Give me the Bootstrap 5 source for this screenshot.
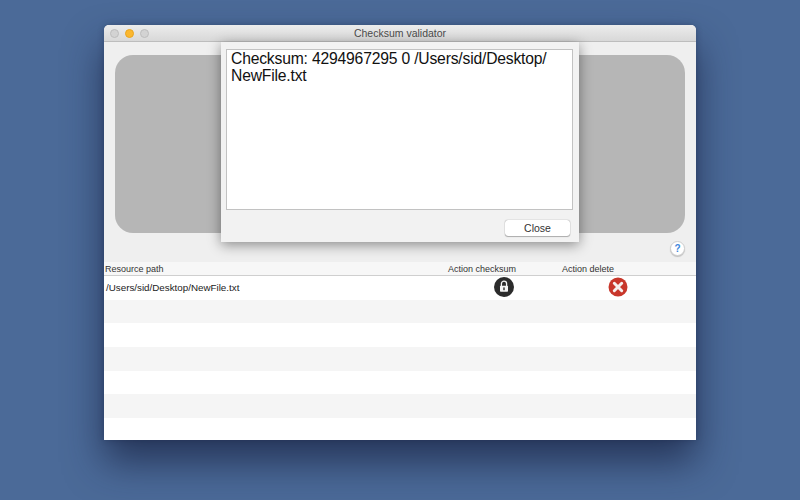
<!DOCTYPE html>
<html lang="en">
<head>
<meta charset="utf-8">
<title>Checksum validator</title>
<link href="https://cdn.jsdelivr.net/npm/bootstrap@5.3.0/dist/css/bootstrap.min.css" rel="stylesheet">
<style>
html,body{height:100%;margin:0}
body{background:#4b6a98;font-family:"Liberation Sans",Arial,sans-serif;overflow:hidden}
.desk{width:800px;height:500px;padding:25px 104px 60px}
.appwin{position:relative;width:592px;height:415px;background:#efefef;border-radius:5px 5px 1px 1px;box-shadow:0 22px 38px rgba(20,30,60,.68),0 0 6px rgba(20,30,60,.3)}
.titlebar{height:17px;background:linear-gradient(#ececec,#d8d8d8);border-radius:5px 5px 0 0;border-bottom:1px solid #bdbdbd;font-size:10.5px;line-height:16px;color:#4c4c4c;text-align:center;position:relative}
.lights{position:absolute;left:6px;top:4px;gap:6px}
.lamp{width:9px;height:9px;border-radius:50%;background:#d3d3d3;border:1px solid #bdbdbd}
.lamp-on{background:#fbb72f;border-color:#e9a51f}
.stage{height:220px;padding:13px 11px 0}
.panel{height:178px;background:#b6b6b6;border-radius:18px}
.helpbtn{position:absolute;left:566px;top:216px;width:15px;height:15px;border-radius:50%;background:#fff;border:1px solid #cfcfcf;box-shadow:0 1px 1px rgba(0,0,0,.2);color:#3d86dc;font-size:10px;font-weight:700;line-height:13px;text-align:center}
.thead-row{height:14px;background:#f7f7f7;border-bottom:1px solid #cfcfcf;font-size:9px;line-height:12px;color:#333;padding-top:1px}
.cellpath{width:344px;padding-left:1px}
.cellsum{width:114px}
.grid-row{height:23.7px;background:#fff;font-size:9.8px;color:#222;line-height:23.7px}
.grid-row:nth-child(even){background:#f5f5f5}
.cellpath2{width:344px;padding-left:2px}
.iconcell{width:114px;padding-left:46px;margin-top:-2px}
.iconcell svg{display:block}
.grid-body{height:164px;overflow:hidden;background:#fff;border-radius:0 0 1px 1px}
.sheet{position:absolute;left:117px;top:17px;width:358px;height:200px;background:#f2f2f2;box-shadow:0 3px 12px rgba(0,0,0,.42)}
.sheet-text{margin:7px 6px 0 5px;height:161px;background:#fff;border:1px solid #c2c2c2;padding:0 4px;font-size:15.7px;letter-spacing:-.19px;line-height:17px;color:#111}
.sheet-foot{padding:10px 9px 0 0}
.closebtn{width:65px;height:16px;background:#fff;border:0;border-radius:3px;box-shadow:0 0 1px rgba(0,0,0,.55),0 1px 1px rgba(0,0,0,.25);font-size:10.5px;line-height:16px;color:#333;padding:0;text-align:center}
</style>
</head>
<body>
<div class="desk">
  <div class="appwin">
    <div class="titlebar">Checksum validator
      <div class="lights d-flex"><span class="lamp"></span><span class="lamp lamp-on"></span><span class="lamp"></span></div>
    </div>
    <div class="stage"><div class="panel"></div></div>
    <div class="thead-row d-flex"><div class="cellpath">Resource path</div><div class="cellsum">Action checksum</div><div>Action delete</div></div>
    <div class="grid-body">
      <div class="grid-row d-flex align-items-center">
        <div class="cellpath2">/Users/sid/Desktop/NewFile.txt</div>
        <div class="iconcell">
          <svg width="20" height="20" viewBox="0 0 20 20"><circle cx="10" cy="10" r="10" fill="#2b2b2b"/><path d="M7.4 9V6.8a2.6 2.6 0 0 1 5.2 0V9" fill="none" stroke="#f4f4f4" stroke-width="1.3"/><rect x="6" y="8.8" width="8" height="6" rx=".8" fill="#f4f4f4"/><rect x="9.3" y="10.4" width="1.4" height="2.8" fill="#2b2b2b"/></svg>
        </div>
        <div class="iconcell">
          <svg width="20" height="20" viewBox="0 0 20 20"><circle cx="10" cy="10" r="9.5" fill="#c8372b"/><path d="M6.3 6.3l7.4 7.4M13.7 6.3l-7.4 7.4" stroke="#f6f0ee" stroke-width="3" stroke-linecap="round"/></svg>
        </div>
      </div>
      <div class="grid-row"></div><div class="grid-row"></div><div class="grid-row"></div><div class="grid-row"></div><div class="grid-row"></div><div class="grid-row"></div>
    </div>
    <div class="sheet">
      <div class="sheet-text">Checksum: 4294967295 0 /Users/sid/Desktop/<br>NewFile.txt</div>
      <div class="sheet-foot d-flex justify-content-end"><button type="button" class="closebtn">Close</button></div>
    </div>
    <div class="helpbtn">?</div>
  </div>
</div>
<script src="https://cdn.jsdelivr.net/npm/bootstrap@5.3.0/dist/js/bootstrap.bundle.min.js"></script>
</body>
</html>
